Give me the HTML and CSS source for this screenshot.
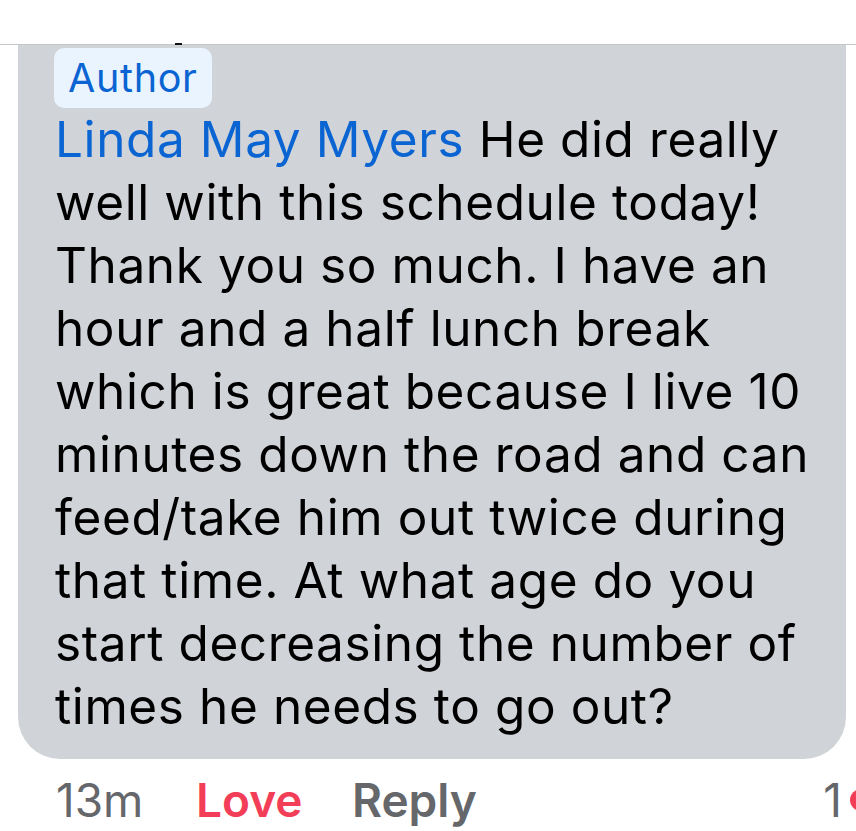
FILE: index.html
```html
<!DOCTYPE html>
<html lang="en">
<head>
<meta charset="utf-8">
<title>Comment</title>
<link rel="stylesheet" href="styles.css">
</head>
<body>
<div class="page">
  <header class="topbar"><span class="tail-mark"></span></header>
  <div class="comment">
    <div class="bubble">
      <span class="badge">Author</span>
      <p class="text"><span class="name">Linda May Myers</span> He did really well with this schedule today! Thank you so much. I have an hour and a half lunch break which is great because I live 10 minutes down the road and can feed/take him out twice during that time. At what age do you start decreasing the number of times he needs to go out?</p>
    </div>
    <div class="actions">
      <span class="time">13m</span>
      <span class="love">Love</span>
      <span class="reply">Reply</span>
      <span class="count">1<span class="react"></span></span>
    </div>
  </div>
</div>
</body>
</html>
```

FILE: styles.css
```css
html, body {
  margin: 0;
  padding: 0;
  background: #ffffff;
}
body {
  font-family: "Inter", "Liberation Sans", sans-serif;
  width: 856px;
  height: 831px;
  overflow: hidden;
}
.page {
  position: relative;
}
.topbar {
  height: 44px;
  background: #ffffff;
  border-bottom: 1px solid #c6c6c8;
  position: relative;
}
.tail-mark {
  position: absolute;
  left: 175px;
  top: 43px;
  width: 7px;
  height: 2px;
  background: #111;
}
.comment {
  padding: 0 10px 0 18px;
}
.bubble {
  background: #d0d3d8;
  border-radius: 0 0 42px 42px;
  padding: 3px 20px 21px 37px;
}
.badge {
  display: inline-block;
  background: #eaf4fe;
  color: #0a64d2;
  border-radius: 10px;
  font-size: 39.5px;
  letter-spacing: 0.7px;
  line-height: 60px;
  height: 60px;
  padding: 0 14px 0 14px;
  margin-left: -1px;
}
.text {
  margin: 0;
  font-size: 49.5px;
  letter-spacing: 0.6px;
  line-height: 63px;
  color: #000000;
}
.name {
  color: #0a64d2;
}
.actions {
  display: flex;
  align-items: baseline;
  padding-left: 38px;
  padding-top: 6px;
  font-size: 46px;
  line-height: 70px;
  color: #65676b;
}
.time {
  width: 140px;
}
.love {
  color: #f33e58;
  font-weight: 600;
  width: 156px;
}
.reply {
  font-weight: 600;
  color: #65676b;
}
.count {
  margin-left: auto;
  margin-right: -26px;
  display: flex;
  align-items: center;
}
.react {
  display: inline-block;
  width: 22px;
  height: 22px;
  border-radius: 50%;
  background: #f33e58;
  margin-left: 8px;
}
```
